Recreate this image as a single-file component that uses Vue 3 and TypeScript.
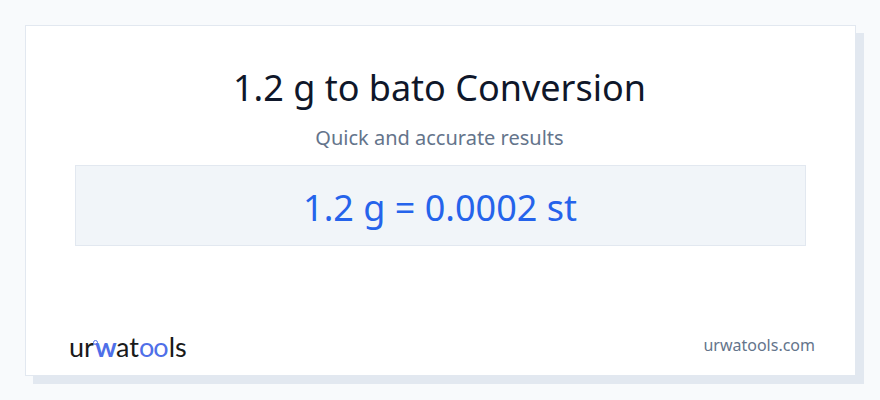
<script setup lang="ts">
const title = "1.2 g to bato Conversion";
const subtitle = "Quick and accurate results";
const result = "1.2 g = 0.0002 st";
</script>

<template>
  <div class="page">
    <div class="card">
      <h1 class="title">{{ title }}</h1>
      <p class="subtitle">{{ subtitle }}</p>
      <div class="result">{{ result }}</div>
      <div class="footer">
        <div class="logo" aria-label="urwatools">
          <span>ur</span><span class="dot"></span><span class="blue w">w</span><span>at</span><span class="blue oo">oo</span><span class="ls">ls</span>
        </div>
        <span class="domain">urwatools.com</span>
      </div>
    </div>
  </div>
</template>

<style>
html,
body {
  margin: 0;
  background: #f8fafc;
}
</style>

<style scoped>
.page {
  width: 880px;
  height: 400px;
  box-sizing: border-box;
  padding: 25px 24px 24px 25px;
  background: #f8fafc;
  font-family: "Noto Sans", sans-serif;
  overflow: hidden;
}

.card {
  width: 831px;
  height: 351px;
  box-sizing: border-box;
  display: flex;
  flex-direction: column;
  align-items: center;
  padding: 37px 49px 0;
  background: #fff;
  border: 1px solid #e2e8f0;
  box-shadow: 8px 8px 0 #e2e8f0;
}

.title {
  margin: 0 2px 0 0;
  font-size: 36px;
  line-height: 50px;
  font-weight: 400;
  color: #0f172a;
}

.subtitle {
  margin: 11px 2px 0 0;
  font-size: 20px;
  line-height: 27px;
  color: #64748b;
}

.result {
  width: 100%;
  height: 81px;
  box-sizing: border-box;
  margin-top: 14px;
  padding: 3px 1px 0 0;
  display: flex;
  align-items: center;
  justify-content: center;
  background: #f1f5f9;
  border: 1px solid #e2e8f0;
  font-size: 36px;
  color: #2563eb;
}

.footer {
  width: 100%;
  height: 40px;
  margin-top: 79px;
  display: flex;
  align-items: center;
  justify-content: space-between;
}

.logo {
  display: flex;
  align-items: baseline;
  margin: 4px 0 0 -6px;
  font-family: "Lato", sans-serif;
  font-size: 27px;
  line-height: 40px;
  color: #1a1a1a;
}

.blue {
  color: #4f6fe8;
}

.w {
  font-weight: 700;
  letter-spacing: -0.5px;
  margin-left: 1px;
}

.oo {
  letter-spacing: -1px;
}

.ls {
  margin-left: 1px;
}

.dot {
  align-self: flex-start;
  width: 3px;
  height: 3px;
  margin: 13px -4px 0 -1px;
  border: 1px solid #4f6fe8;
  border-radius: 50%;
}

.domain {
  margin-right: -9px;
  font-size: 16px;
  color: #64748b;
}
</style>
